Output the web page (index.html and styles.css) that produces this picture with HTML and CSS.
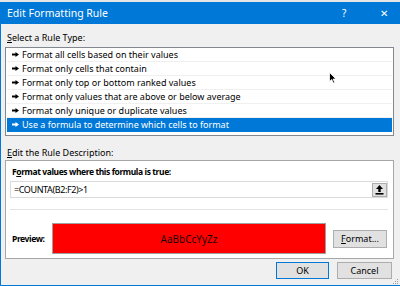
FILE: index.html
```html
<!DOCTYPE html>
<html lang="en">
<head>
    <meta charset="UTF-8">
    <title>Edit Formatting Rule</title>
    <link rel="stylesheet" href="styles.css">
</head>
<body>
    <div class="window">
        <div class="titlebar">
            <span class="title">Edit Formatting Rule</span>
            <span class="help">?</span>
            <span class="close">&#x2715;</span>
        </div>
        <div class="dialog-body">
            <div class="label"><u>S</u>elect a Rule Type:</div>
            <ul class="rule-list">
                <li><svg class="arrow" width="7" height="5" viewBox="0 0 7 5"><path d="M0 1.6h3.5V0L7 2.5 3.5 5V3.4H0z"/></svg>Format all cells based on their values</li>
                <li><svg class="arrow" width="7" height="5" viewBox="0 0 7 5"><path d="M0 1.6h3.5V0L7 2.5 3.5 5V3.4H0z"/></svg>Format only cells that contain</li>
                <li><svg class="arrow" width="7" height="5" viewBox="0 0 7 5"><path d="M0 1.6h3.5V0L7 2.5 3.5 5V3.4H0z"/></svg>Format only top or bottom ranked values</li>
                <li><svg class="arrow" width="7" height="5" viewBox="0 0 7 5"><path d="M0 1.6h3.5V0L7 2.5 3.5 5V3.4H0z"/></svg>Format only values that are above or below average</li>
                <li><svg class="arrow" width="7" height="5" viewBox="0 0 7 5"><path d="M0 1.6h3.5V0L7 2.5 3.5 5V3.4H0z"/></svg>Format only unique or duplicate values</li>
                <li class="selected"><svg class="arrow" width="7" height="5" viewBox="0 0 7 5"><path d="M0 1.6h3.5V0L7 2.5 3.5 5V3.4H0z"/></svg>Use a formula to determine which cells to format</li>
            </ul>

            <div class="label section-label"><u>E</u>dit the Rule Description:</div>
            <div class="description">
                <div class="desc-title">F<u>o</u>rmat values where this formula is true:</div>
                <div class="formula">
                    <span class="formula-text">=COUNTA(B2:F2)&gt;1</span>
                    <span class="collapse-btn">
                        <svg width="9" height="10" viewBox="0 0 9 10"><path d="M4.5 0L8 4H5.7v3H3.3V4H1z"/><rect x="0.5" y="8" width="8" height="1.6"/></svg>
                    </span>
                </div>
                <div class="preview-row">
                    <span class="preview-label">Preview:</span>
                    <div class="preview">AaBbCcYyZz</div>
                    <span class="btn format-btn"><u>F</u>ormat...</span>
                </div>
            </div>

            <div class="actions">
                <span class="btn ok-btn">OK</span>
                <span class="btn">Cancel</span>
            </div>
        </div>

        <!-- cursor do mouse sobre a lista -->
        <svg class="cursor" width="8" height="12" viewBox="0 0 8 12"><path d="M0.5 0.5v9l2.2-2 1.6 3.6 1.4-.6-1.6-3.5H7z" fill="#000" stroke="#fff" stroke-width="0.8"/></svg>
        <svg class="grip" width="7" height="7" viewBox="0 0 7 7" fill="#9a9a9a"><rect x="5" y="1" width="1" height="1"/><rect x="3" y="3" width="1" height="1"/><rect x="5" y="3" width="1" height="1"/><rect x="1" y="5" width="1" height="1"/><rect x="3" y="5" width="1" height="1"/><rect x="5" y="5" width="1" height="1"/></svg>
    </div>
</body>
</html>
```

FILE: styles.css
```css
/* Caixa de dialogo estilo Windows */
* {
    margin: 0;
    padding: 0;
    box-sizing: border-box;
}
body {
    background: #e6e6e6;
    font-family: 'Noto Sans', 'Open Sans', sans-serif;
    font-size: 9px;
    color: #000;
    overflow: hidden;
}
.window {
    position: relative;
    margin-top: 2px;
    height: 284px;
    background: #f0f0f0;
    border-left: 1px solid #0078d7;
    border-bottom: 1px solid #0078d7;
}
.titlebar {
    height: 22px;
    background: #0078d7;
    color: #fff;
    display: flex;
    align-items: center;
    padding-left: 6px;
    font-size: 10.5px;
}
.title {
    flex: 1;
}
.help {
    width: 10px;
    margin-right: 28px;
    font-size: 10px;
}
.close {
    width: 20px;
    font-size: 10px;
}
.dialog-body {
    padding: 0 6px 0 4px;
}
.label {
    height: 14px;
    line-height: 14px;
    margin-top: 7px;
    padding-left: 2px;
}
.section-label {
    margin-top: 10px;
}
.rule-list {
    list-style: none;
    margin-top: 2px;
    background: #fff;
    border: 1px solid #828790;
    padding: 0 1px 3px 1px;
}
.rule-list li {
    height: 14px;
    line-height: 13px;
    border-bottom: 1px solid #f0f0f0;
    padding-left: 5px;
    display: flex;
    align-items: center;
    white-space: nowrap;
}
.arrow {
    margin-right: 3px;
    fill: #000;
}
.rule-list li.selected {
    background: #0078d7;
    color: #fff;
    border-bottom-color: #0078d7;
}
.rule-list li.selected .arrow {
    fill: #fff;
}
.description {
    background: #fff;
    border: 1px solid #a7a7a7;
    padding: 4px 5px 4px 4px;
}
.desc-title {
    height: 14px;
    line-height: 14px;
    font-weight: bold;
    font-size: 8.5px;
    letter-spacing: -0.4px;
    padding-left: 2px;
}
.formula {
    margin-top: 2px;
    height: 17px;
    border: 1px solid #dadada;
    display: flex;
    align-items: center;
    justify-content: space-between;
}
.formula-text {
    padding-left: 3px;
    letter-spacing: -0.4px;
}
.collapse-btn {
    width: 15px;
    height: 14px;
    background: #e1e1e1;
    border: 1px solid #adadad;
    display: flex;
    align-items: center;
    justify-content: center;
}
.preview-row {
    margin-top: 11px;
    border-top: 1px solid #e3e3e3;
    padding-top: 13px;
    display: flex;
    align-items: center;
}
.preview-label {
    width: 42px;
    padding-left: 2px;
    font-weight: bold;
    font-size: 8.5px;
    letter-spacing: -0.4px;
}
.preview {
    width: 274px;
    height: 31px;
    background: #ff0000;
    border: 1px solid #a0a0a0;
    color: #1a0000;
    font-size: 10px;
    display: flex;
    align-items: center;
    justify-content: center;
}
.btn {
    height: 17px;
    background: #e1e1e1;
    border: 1px solid #adadad;
    display: flex;
    align-items: center;
    justify-content: center;
}
.format-btn {
    width: 54px;
    height: 18px;
    margin-left: 7px;
}
.actions {
    margin-top: 3px;
    display: flex;
    justify-content: flex-end;
    gap: 8px;
    padding-right: 2px;
}
.actions .btn {
    width: 55px;
}
.actions .ok-btn {
    width: 53px;
    border-color: #0078d7;
}
.cursor {
    position: absolute;
    left: 328px;
    top: 70px;
}
.grip {
    position: absolute;
    right: 1px;
    bottom: 0;
}
```
